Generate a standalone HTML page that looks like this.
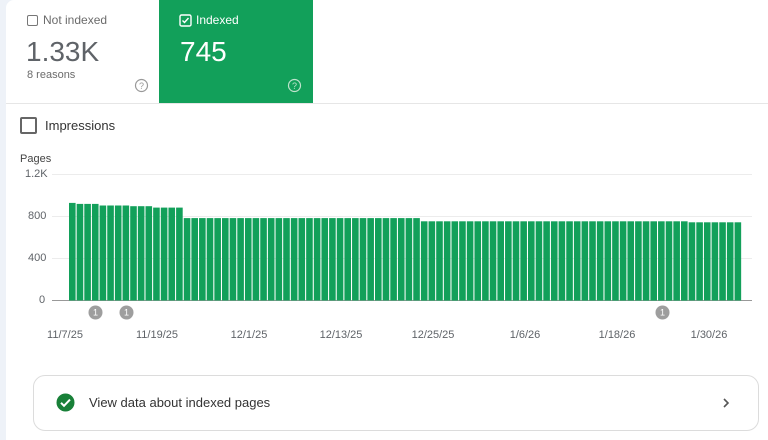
<!DOCTYPE html>
<html><head><meta charset="utf-8"><style>
*{margin:0;padding:0;box-sizing:border-box}
body{width:768px;height:440px;background:#eef2f8;font-family:"Liberation Sans",Arial,sans-serif;position:relative;overflow:hidden}
.panel{position:absolute;left:6px;top:0;width:762px;height:440px;background:#fff;border-top-left-radius:8px}
.abs{position:absolute}
.cb{position:absolute;width:11px;height:11px;border:1.5px solid #777;border-radius:2px}
.lab{position:absolute;font-size:12px}
.axis{position:absolute;font-size:11px;color:#5f6368}
</style></head><body>
<div class="panel"></div>
<div class="abs" style="left:6px;top:103px;width:762px;height:1px;background:#e6e6e6"></div>
<div class="abs" style="left:159px;top:0;width:154px;height:103px;background:#12a05a"></div>
<div class="cb" style="left:27px;top:15px"></div>
<div class="lab" style="left:43px;top:13px;color:#6b6b6b">Not indexed</div>
<div class="abs" style="left:26px;top:36px;font-size:28px;color:#5f6368">1.33K</div>
<div class="abs" style="left:27px;top:69px;font-size:11px;color:#6b6b6b">8 reasons</div>
<svg class="abs" style="left:134px;top:78px" width="15" height="15"><circle cx="7.5" cy="7.5" r="6" fill="none" stroke="#999" stroke-width="1.2"/><text x="7.5" y="11" font-size="9" text-anchor="middle" fill="#999" font-family="Liberation Sans">?</text></svg>
<svg class="abs" style="left:179px;top:14px" width="13" height="13"><rect x="1" y="1" width="11" height="11" rx="1.5" fill="none" stroke="#fff" stroke-width="1.4"/><path d="M3.5 6.5l2 2 4-4.5" fill="none" stroke="#fff" stroke-width="1.4"/></svg>
<div class="lab" style="left:196px;top:13px;color:#fff">Indexed</div>
<div class="abs" style="left:180px;top:36px;font-size:28px;color:#fff">745</div>
<svg class="abs" style="left:287px;top:78px" width="15" height="15"><circle cx="7.5" cy="7.5" r="6" fill="none" stroke="#bfe3cc" stroke-width="1.2"/><text x="7.5" y="11" font-size="9" text-anchor="middle" fill="#bfe3cc" font-family="Liberation Sans">?</text></svg>
<div class="abs" style="left:20px;top:117px;width:17px;height:17px;border:2px solid #666;border-radius:2px"></div>
<div class="abs" style="left:45px;top:118px;font-size:13px;color:#333">Impressions</div>
<div class="axis" style="left:20px;top:153px;color:#444">Pages</div>
<div class="axis" style="left:25px;top:168px">1.2K</div>
<div class="axis" style="left:28px;top:210px">800</div>
<div class="axis" style="left:28px;top:252px">400</div>
<div class="axis" style="left:39px;top:294px">0</div>
<svg class="abs" style="left:0;top:0" width="768" height="440" id="ch">
<line x1="52" y1="174.5" x2="752" y2="174.5" stroke="#ececec"/>
<line x1="52" y1="216.5" x2="752" y2="216.5" stroke="#ececec"/>
<line x1="52" y1="258.5" x2="752" y2="258.5" stroke="#ececec"/>
<line x1="52" y1="300.5" x2="752" y2="300.5" stroke="#999"/>
<g id="bars" fill="#12a05a"></g>
<g fill="#9e9e9e"><circle cx="95.5" cy="312.5" r="7"/><circle cx="126.5" cy="312.5" r="7"/><circle cx="662.5" cy="312.5" r="7"/></g>
<g fill="#fff" font-size="9" font-family="Liberation Sans" text-anchor="middle"><text x="95.5" y="315.5">1</text><text x="126.5" y="315.5">1</text><text x="662.5" y="315.5">1</text></g>
<g fill="#5f6368" font-size="11" font-family="Liberation Sans" text-anchor="middle">
<text x="65" y="338">11/7/25</text><text x="157" y="338">11/19/25</text><text x="249" y="338">12/1/25</text><text x="341" y="338">12/13/25</text><text x="433" y="338">12/25/25</text><text x="525" y="338">1/6/26</text><text x="617" y="338">1/18/26</text><text x="709" y="338">1/30/26</text>
</g>
</svg>
<div class="abs" style="left:33px;top:375px;width:726px;height:56px;border:1px solid #dcdcdc;border-radius:12px"></div>
<svg class="abs" style="left:56px;top:393px" width="19" height="19"><circle cx="9.5" cy="9.5" r="9" fill="#188038"/><path d="M5 9.8l3 3 6-6.2" fill="none" stroke="#fff" stroke-width="2"/></svg>
<div class="abs" style="left:89px;top:395px;font-size:13px;color:#333">View data about indexed pages</div>
<svg class="abs" style="left:721px;top:397px" width="10" height="12"><path d="M3 2l4 4-4 4" fill="none" stroke="#555" stroke-width="1.6"/></svg>
<script>
var g=document.getElementById('bars'),s='';
for(var i=0;i<88;i++){var v=i==0?925:i<=3?915:i<=7?900:i<=10?893:i<=14?880:i<=45?780:i<=80?750:740;
var y=300-v*0.105;s+='<rect x="'+(69+i*7.65).toFixed(2)+'" y="'+y.toFixed(1)+'" width="6.6" height="'+(300.5-y).toFixed(1)+'"/>';}
g.innerHTML=s;
</script>
</body></html>
